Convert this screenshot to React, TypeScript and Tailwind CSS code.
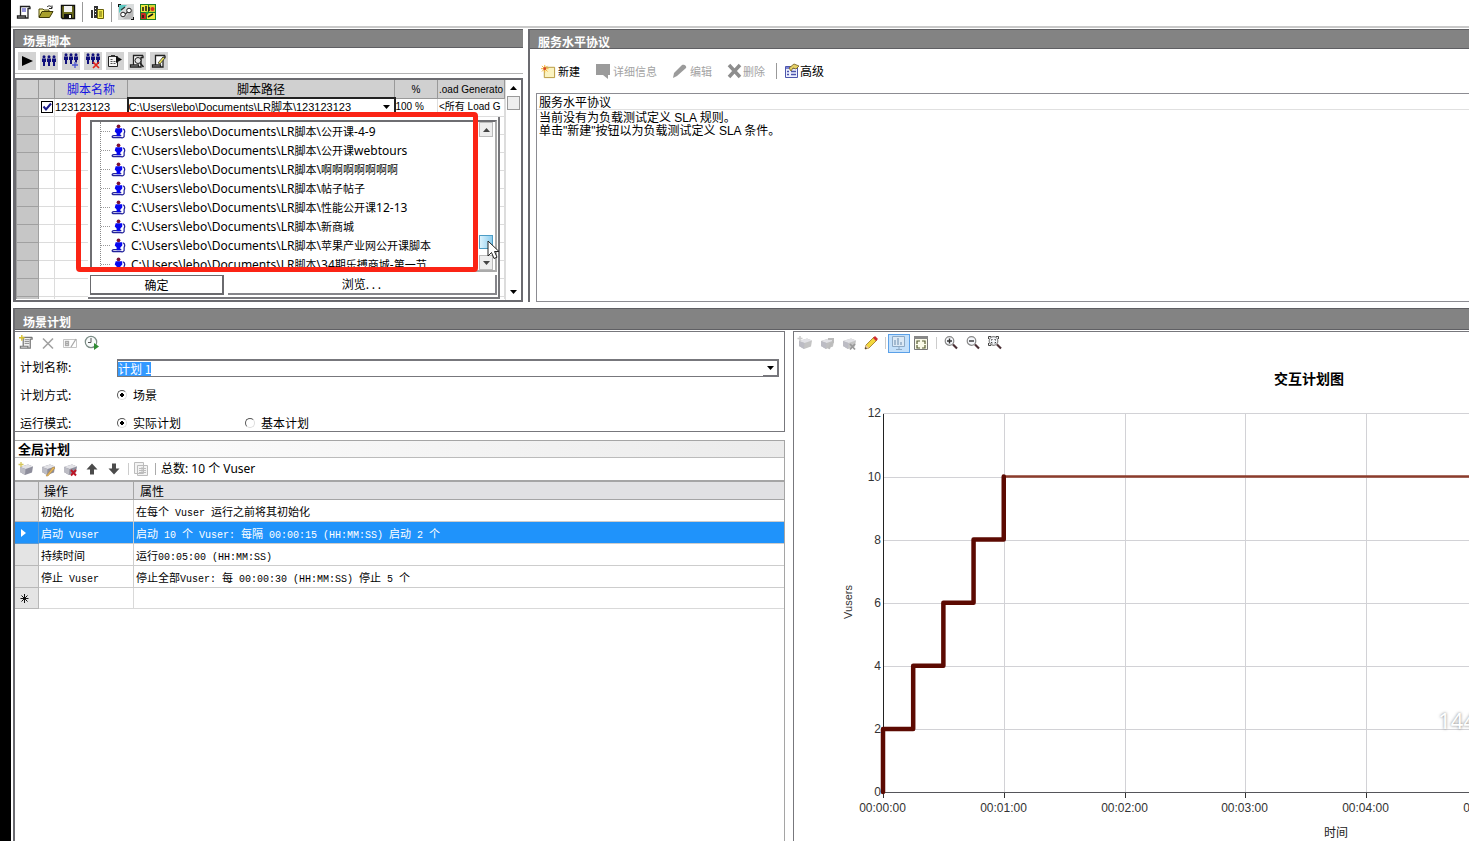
import { Fragment, useEffect, useRef, useState } from 'react'
import type { ReactNode } from 'react'

const ROOT = 'C:\\Users\\lebo\\Documents\\LR脚本\\'

const SCRIPTS = [
  '公开课-4-9',
  '公开课webtours',
  '啊啊啊啊啊啊啊',
  '帖子帖子',
  '性能公开课12-13',
  '新商城',
  '苹果产业网公开课脚本',
  '34期乐搏商城-第一节',
]

const ACTIONS = [
  { name: '初始化', props: '在每个 Vuser 运行之前将其初始化' },
  { name: '启动 Vuser', props: '启动 10 个 Vuser: 每隔 00:00:15 (HH:MM:SS) 启动 2 个' },
  { name: '持续时间', props: '运行00:05:00 (HH:MM:SS)' },
  { name: '停止 Vuser', props: '停止全部Vuser: 每 00:00:30 (HH:MM:SS) 停止 5 个' },
]

function Icon({ children, size = 16 }: { children: ReactNode; size?: number }) {
  return (
    <svg width={size} height={size} viewBox="0 0 16 16" fill="none" aria-hidden="true" className="block shrink-0">
      {children}
    </svg>
  )
}

function Scroll({ dim = false }: { dim?: boolean }) {
  const c = dim ? '#777' : '#222'
  return (
    <>
      <path d="M4 2h10v2h-2v9H3v1h-2v-2h3z" fill={dim ? '#f2f2f2' : '#fff'} />
      <path d="M4.500 12V2.500h9.500M14 2.500v2h-2M12 4v8M1.500 12h8v2h-8zM9.500 14H12v-3" stroke={c} strokeWidth="1.300" />
    </>
  )
}

function People() {
  return (
    <g fill="#10107c">
      {[3, 8, 13].map(x => (
        <g key={x}>
          <circle cx={x} cy="3.800" r="1.500" />
          <path d={`M${x - 2} 5.500h4v3.500h-1v4h-2v-4h-1z`} />
        </g>
      ))}
    </g>
  )
}

function Cube({ color = '#8e8e9c' }: { color?: string }) {
  return (
    <>
      <path d="M2 6l8-2.500 5 2-1 6-7 2.500-5-3z" fill={color} />
      <path d="M2 6l8-2.500 5 2-7.500 2.500z" fill="#e2e2e6" />
      <path d="M2 6l5.500 2-.5 6-5-3z" fill="#bcbcc4" />
    </>
  )
}

function Pencil() {
  return (
    <>
      <path d="M2 14l1-4 8-8 3 3-8 8z" fill="#f3d83c" stroke="#8a6414" strokeWidth=".7" />
      <path d="M10 3l2-2 3 3-2 2z" fill="#cf2d35" />
      <path d="M2 14l1-4 3 3z" fill="#eecaa4" />
      <path d="M2 14l.5-2 1.500 1.500z" fill="#222" />
    </>
  )
}

function Zoomer({ children }: { children?: ReactNode }) {
  return (
    <Icon>
      <circle cx="6.500" cy="6" r="4.300" fill="#f4f6fa" stroke="#888" strokeWidth="1.200" />
      <path d="M10 9.500l4 4" stroke="#4a2f35" strokeWidth="2.200" />
      {children}
    </Icon>
  )
}

function Tool({ label, children, className = 'size-[18px]' }: { label: string; children: ReactNode; className?: string }) {
  return (
    <button type="button" aria-label={label} className={`flex shrink-0 items-center justify-center ${className}`}>
      {children}
    </button>
  )
}

function Sep({ className = 'h-4 bg-[#b5b5b5]' }: { className?: string }) {
  return <span className={`w-px shrink-0 ${className}`} />
}

// latin runs get a font of their own beside the full-width characters
function Mixed({ text, latin }: { text: string; latin: string }) {
  return (
    <>
      {text.split(/([\x20-\x7e]+)/).map((part, i) =>
        i % 2 ? (
          <span key={i} className={`whitespace-pre ${latin}`}>
            {part}
          </span>
        ) : (
          <Fragment key={i}>{part}</Fragment>
        ),
      )}
    </>
  )
}

function TitleBar({ title, className }: { title: string; className: string }) {
  return (
    <h2 className={`shrink-0 border-y border-[#5f5f63] bg-[#838383] pl-2 text-xs font-bold text-white ${className}`}>
      {title}
    </h2>
  )
}

function MainToolbar() {
  return (
    <header className="flex h-[28px] shrink-0 items-center gap-[6px] border-b-2 border-[#c9c9c9] pb-[2px] pl-[5px]">
      <Tool label="新建场景" className="size-4">
        <Icon>
          <Scroll />
          <path d="M6 5h4M6 7h4" stroke="#2b2bb5" />
        </Icon>
      </Tool>
      <Tool label="打开" className="size-4">
        <Icon>
          <path d="M1 13V5h4l1 1h5v2H5z" fill="#f6ef8d" stroke="#4d4908" />
          <path d="M1 13.500l3-6h11l-3.500 6z" fill="#a8a02c" stroke="#3d3a08" />
          <path d="M9 3c2-2 4-1 5 1m0-2.500v3h-3" stroke="#222" />
        </Icon>
      </Tool>
      <Tool label="保存" className="size-4">
        <Icon>
          <path d="M1.500 1.500h13v13h-12l-1-1z" fill="#6b6b1d" stroke="#111" strokeWidth="1.400" />
          <path d="M4 2h8v6H4z" fill="#f3f3f3" />
          <path d="M4 10h8v4H4z" fill="#111" />
          <path d="M9 11h2v3H9z" fill="#fff" />
        </Icon>
      </Tool>
      <Sep className="h-5 bg-[#999]" />
      <Tool label="负载生成器" className="size-4">
        <Icon>
          <path d="M2 6h2v8H2zM5 2h4v12H5z" fill="#333" />
          <path d="M6 4h1v1H6zM6 7h1v1H6zM6 10h1v1H6z" fill="#fff" />
          <path d="M8.500 5.500h6v9h-6z" fill="#f4ec4e" stroke="#69620c" />
          <path d="M10 8h3M10 10h3M10 12h3" stroke="#69620c" />
        </Icon>
      </Tool>
      <Sep className="h-5 bg-[#999]" />
      <Tool label="设计" className="size-4">
        <Icon>
          <path d="M0 0h16v16H0z" fill="#d9dcdc" />
          <path d="M1 1h8L1 9z" fill="#5fc9c2" />
          <path d="M15 5v10H5z" fill="#b9b9b9" />
          <path d="M5 12l7-6M3 6l4-3" stroke="#333" strokeWidth="1.200" />
          <circle cx="5" cy="10.500" r="2.300" fill="#fff" stroke="#222" />
          <circle cx="11" cy="6.500" r="2.300" fill="#fff" stroke="#222" />
          <path d="M0 0h3v1H1v2H0zM16 16h-3v-1h2v-2h1z" fill="#111" />
        </Icon>
      </Tool>
      <Tool label="运行" className="size-4">
        <Icon>
          <path d="M0 0h16v16H0z" fill="#1c7c28" />
          <path d="M1 1h7v7H1z" fill="#f0e83a" />
          <path d="M9 1h6v7H9z" fill="#d8cf2e" />
          <path d="M1 9h5v6H1z" fill="#c52b22" />
          <path d="M7 9h8v6H7z" fill="#f0e83a" />
          <path d="M3 3v4M6 2v5M9 3v4M3 11v3M8 13l5-3" stroke="#161616" strokeWidth="1.500" />
          <circle cx="12.500" cy="5" r="2" fill="#d62b1e" />
          <circle cx="7" cy="9" r="1.500" fill="#1fa03a" />
        </Icon>
      </Tool>
    </header>
  )
}

function ScriptToolbar() {
  const cls = 'size-[18px] bg-[#d3d3d3]'
  return (
    <div className="flex h-[26px] shrink-0 items-center gap-1 border-b border-[#b4b4b4] pl-[3px]">
      <Tool label="运行脚本" className={cls}>
        <Icon>
          <path d="M3 3l11 5-11 5z" fill="#000" />
        </Icon>
      </Tool>
      <Tool label="Vuser 组" className={cls}>
        <Icon>
          <People />
        </Icon>
      </Tool>
      <Tool label="添加组" className={cls}>
        <Icon>
          <g transform="translate(0 -2)">
            <People />
          </g>
          <path d="M9 12h6M12 9v6" stroke="#d3d3d3" strokeWidth="3" />
          <path d="M9 12h6M12 9v6" stroke="#4a54d2" strokeWidth="1.300" />
        </Icon>
      </Tool>
      <Tool label="删除组" className={cls}>
        <Icon>
          <g transform="translate(0 -2)">
            <People />
          </g>
          <path d="M8 9l6 6M14 9l-6 6" stroke="#e2231a" strokeWidth="1.700" />
        </Icon>
      </Tool>
      <Tool label="运行时设置" className={cls}>
        <Icon>
          <path d="M1.500 3.500h9v10h-9z" fill="#f4f4f4" stroke="#222" />
          <path d="M4 2h4v2H4z" fill="#333" />
          <path d="M3.500 6.500h2M3.500 8.500h2M3.500 10.500h2M6.500 8.500h2M6.500 10.500h2" stroke="#555" />
          <path d="M9 3l6 3.500L9 10z" fill="#111" />
        </Icon>
      </Tool>
      <Tool label="详细信息" className={cls}>
        <Icon>
          <Scroll />
          <circle cx="9" cy="7.500" r="3" fill="#e4e4e4" stroke="#222" />
          <path d="M11 10l3.500 4" stroke="#222" strokeWidth="1.500" />
        </Icon>
      </Tool>
      <Tool label="查看脚本" className={cls}>
        <Icon>
          <Scroll />
          <path d="M7 10l5-6 2 1-5 6z" fill="#eee45a" stroke="#333" strokeWidth=".8" />
        </Icon>
      </Tool>
    </div>
  )
}

function ScriptPicker({ onPick }: { onPick: (s: string) => void }) {
  return (
    <div className="absolute top-[37px] left-[72px] flex h-[182px] w-[412px] flex-col border-r-2 border-b-2 border-[#77777b] bg-white pt-[3px] pr-px pb-[2px] pl-[2px] text-black">
      <div className="flex h-[152px] shrink-0 border-2 border-r-[#aaa] border-b-[#aaa] border-[#6e6e72] bg-white">
        <ul className="ml-2 flex-1 overflow-hidden border-l border-dotted border-[#888] text-[11px] leading-[19px]">
          {SCRIPTS.map(s => (
            <li key={s}>
              <button type="button" onClick={() => onPick(s)} className="flex h-[19px] items-center whitespace-nowrap">
                <span className="mr-px w-[9px] border-t border-dotted border-[#999]" />
                <Icon size={15}>
                  <path d="M13 5c1.500 1 2 3 1 5v3.500c-1 1.500-2 1.500-3 1H2c-1.500-1-.5-2 1-2h8" stroke="#22229c" strokeWidth="1.300" />
                  <path d="M5 4.500h7v3.500l-2 2v3H6v-3L4 8z" fill="#0808f0" />
                  <circle cx="8" cy="2.500" r="2" fill="#7a1236" />
                </Icon>
                <span className="ml-[5px]">
                  <Mixed text={ROOT + s} latin="text-xs font-['Noto_Sans',sans-serif]" />
                </span>
              </button>
            </li>
          ))}
        </ul>
        <div className="flex w-[18px] shrink-0 flex-col items-center">
          <ScrollButton up />
          <span className="mt-[98px] h-[14px] w-[14px] border border-[#4d9cc4] bg-linear-to-r from-[#dcf3fd] to-[#8ccdee]" />
          <span className="flex-1" />
          <ScrollButton />
        </div>
      </div>
      <div className="mt-[3px] flex flex-1 gap-1 text-xs">
        <button type="button" className="w-[134px] border-2 border-t border-l border-[#6a6a6e]">
          确定
        </button>
        <button type="button" className="flex-1 border-r-2 border-b-2 border-[#85858a]">
          浏览. . .
        </button>
      </div>
    </div>
  )
}

function ScrollButton({ up = false }: { up?: boolean }) {
  return (
    <button
      type="button"
      aria-label={up ? '向上滚动' : '向下滚动'}
      className="flex h-[15px] w-[14px] shrink-0 items-center justify-center border border-[#bbb] bg-[#ededed]"
    >
      <svg width="7" height="4" viewBox="0 0 7 4" aria-hidden="true">
        <path d={up ? 'M0 4l3.500-4L7 4z' : 'M0 0l3.500 4L7 0z'} fill="#444" />
      </svg>
    </button>
  )
}

function ScriptPanel() {
  const [path, setPath] = useState('123123123')
  return (
    <section className="relative flex w-[510px] shrink-0 flex-col border-l-2 border-[#6b6b70]">
      <TitleBar title="场景脚本" className="h-[19px] leading-[22px]" />
      <ScriptToolbar />
      <div className="relative mt-1 flex flex-1 border-2 border-l border-[#6b6b70]">
        <div className="h-[219px] flex-1 overflow-hidden">
          <table className="w-full table-fixed border-collapse font-['Liberation_Sans','Noto_Sans_CJK_SC',sans-serif] text-[11px]">
            <colgroup>
              <col className="w-[22px]" />
              <col className="w-[16px]" />
              <col className="w-[73px]" />
              <col className="w-[267px]" />
              <col className="w-[43px]" />
              <col />
            </colgroup>
            <thead>
              <tr className="h-[18px] bg-[#d0d0d0] text-xs leading-[14px]">
                <th className="border border-t-0 border-[#999] p-0" />
                <th className="border border-t-0 border-[#999] p-0" />
                <th className="border border-t-0 border-[#999] p-0 pt-[3px] font-normal text-[#1414e0]">脚本名称</th>
                <th className="border border-t-0 border-[#999] p-0 pt-[3px] font-normal">脚本路径</th>
                <th className="border border-t-0 border-[#999] p-0 pt-[3px] text-[10px] font-normal">%</th>
                <th className="border border-t-0 border-[#999] p-0 pt-[3px] text-[10px] font-normal whitespace-nowrap">
                  .oad Generato
                </th>
              </tr>
            </thead>
            <tbody>
              <tr className="h-[18px] leading-[16px] whitespace-nowrap">
                <td className="border border-[#aaa] bg-[#cacaca] p-0" />
                <td className="border border-[#ddd] p-0">
                  <label className="relative ml-[2px] block size-3">
                    <input
                      type="checkbox"
                      defaultChecked
                      aria-label="启用脚本"
                      className="peer block size-3 appearance-none border border-black bg-white"
                    />
                    <svg
                      viewBox="0 0 12 12"
                      className="pointer-events-none absolute inset-0 hidden peer-checked:block"
                      aria-hidden="true"
                    >
                      <path d="M2.500 5.500l2.500 3 5-6" stroke="#1c1c8c" strokeWidth="2" fill="none" />
                    </svg>
                  </label>
                </td>
                <td className="border border-[#ddd] p-0">123123123</td>
                <td className="border-2 border-[#222] p-0">
                  <div className="flex items-center">
                    <select
                      aria-label="脚本路径"
                      value={path}
                      onChange={e => setPath(e.target.value)}
                      className="h-[15px] min-w-0 flex-1 appearance-none bg-white leading-[15px] outline-none"
                    >
                      {['123123123', ...SCRIPTS].map(s => (
                        <option key={s} value={s}>
                          {ROOT + s}
                        </option>
                      ))}
                    </select>
                    <svg width="7" height="4" viewBox="0 0 7 4" className="mr-1" aria-hidden="true">
                      <path d="M0 0h7L3.500 4z" />
                    </svg>
                  </div>
                </td>
                <td className="border border-[#ddd] p-0 text-[10px]">100 %</td>
                <td className="border border-[#ddd] p-0 pl-px text-[10px]">&lt;所有 Load G</td>
              </tr>
              {Array.from({ length: 11 }, (_, i) => (
                <tr key={i} className="h-[18px]">
                  <td className="border border-[#a0a0a0] bg-[#c6c6c6] p-0" />
                  {[0, 1, 2, 3, 4].map(c => (
                    <td key={c} className="border border-[#dcdcdc] p-0" />
                  ))}
                </tr>
              ))}
            </tbody>
          </table>
        </div>
        <div className="flex w-[16px] shrink-0 flex-col items-center justify-between border-l border-[#ddd] py-[6px]">
          <button type="button" aria-label="向上滚动" className="flex flex-col items-center">
            <svg width="7" height="4" viewBox="0 0 7 4" aria-hidden="true">
              <path d="M0 4l3.500-4L7 4z" />
            </svg>
            <span className="mt-[6px] h-[14px] w-[13px] border border-[#999] bg-[#eee]" />
          </button>
          <button type="button" aria-label="向下滚动">
            <svg width="7" height="4" viewBox="0 0 7 4" aria-hidden="true">
              <path d="M0 0h7L3.500 4z" />
            </svg>
          </button>
        </div>
        <ScriptPicker onPick={setPath} />
      </div>
      <div className="pointer-events-none absolute top-[83px] left-[61px] h-[160px] w-[402px] rounded-[4px] border-5 border-[#fb2415]" />
      <svg width="14" height="20" viewBox="0 0 14 20" className="absolute top-[211px] left-[472px]" aria-hidden="true">
        <path d="M1 1v15l3.500-3.500 2.500 6 3-1.300-2.500-5.700H12z" fill="#fff" stroke="#222" />
      </svg>
    </section>
  )
}

function SlaPanel() {
  const dim = 'flex items-center gap-[2px] text-[#a3a3a3]'
  return (
    <section className="flex min-w-0 flex-1 flex-col border-l-2 border-[#6b6b70]">
      <TitleBar title="服务水平协议" className="h-[20px] leading-[23px]" />
      <div className="flex h-11 shrink-0 items-center gap-[15px] pl-[11px] text-[11px]">
        <button type="button" className="flex items-center gap-[2px]">
          <Icon size={15}>
            <path d="M3.500 3.500h11v11h-11z" fill="#fbf3c0" stroke="#b5963a" />
            <path d="M4 1v8M0 5h8M1 2l6 6M7 2L1 8" stroke="#f2ae2e" />
            <circle cx="4" cy="5" r="1.500" fill="#d9432c" />
          </Icon>
          新建
        </button>
        <button type="button" disabled className={dim}>
          <Icon>
            <path d="M1 1h14v11h-2v4l-5-4H1z" fill="#9b9b9b" />
          </Icon>
          详细信息
        </button>
        <button type="button" disabled className={dim}>
          <Icon>
            <path d="M1 15l1-5 8-8c2-1 5 1 4 3l-9 8z" fill="#9b9b9b" />
          </Icon>
          编辑
        </button>
        <button type="button" disabled className="flex items-center text-[#a3a3a3]">
          <Icon>
            <path d="M2 2l11 12M13 2L2 14" stroke="#8d8d8d" strokeWidth="3.500" />
          </Icon>
          删除
        </button>
        <span className="-mx-1">
          <Sep className="block h-4 bg-[#999]" />
        </span>
        <button type="button" className="-ml-1 flex items-center text-xs">
          <Icon>
            <path d="M1.500 3.500h12v11h-12z" fill="#edf0ff" stroke="#4d56ad" />
            <path d="M2 4h11v2H2z" fill="#7a83d6" />
            <path d="M3 8.500h2M3 11.500h2M7 8.500h5M7 11.500h5" stroke="#4d56ad" strokeWidth="1.300" />
            <path d="M5 5l5-4 5 2-3 3-3-1-2 3z" fill="#e4d068" stroke="#75601c" strokeWidth=".8" />
          </Icon>
          高级
        </button>
      </div>
      <div className="ml-[6px] flex-1 border border-r-0 border-[#8c8c92] text-xs">
        <p className="h-[16px] border-b border-[#e0e0e0] pl-[2px] leading-[16px]">服务水平协议</p>
        <div className="pt-px pl-[2px] leading-[12px]">
          <p>
            <Mixed text="当前没有为负载测试定义 SLA 规则。" latin="font-['Liberation_Sans',sans-serif]" />
          </p>
          <p>
            <Mixed text={'单击"新建"按钮以为负载测试定义 SLA 条件。'} latin="font-['Liberation_Sans',sans-serif]" />
          </p>
        </div>
      </div>
    </section>
  )
}

function Radio({ name, label, checked = false }: { name: string; label: string; checked?: boolean }) {
  return (
    <label className="flex items-start gap-[6px]">
      <input
        type="radio"
        name={name}
        defaultChecked={checked}
        className="size-[10px] appearance-none rounded-full border border-[#ddd] border-t-[#555] border-l-[#555] checked:bg-[radial-gradient(circle,#000_2px,transparent_2px)]"
      />
      <span className="leading-[10px]">{label}</span>
    </label>
  )
}

function PlanForm() {
  const ref = useRef<HTMLInputElement>(null)

  useEffect(() => {
    ref.current?.focus()
    ref.current?.select()
  }, [])

  return (
    <div className="h-[101px] shrink-0 overflow-hidden border border-l-0 border-[#77777c] text-xs">
      <div className="flex h-[21px] items-center gap-[6px] pl-[3px]">
        <Tool label="新建计划" className="size-4">
          <Icon size={15}>
            <Scroll dim />
            <path d="M6 5h5M6 7h5M6 9h5" stroke="#888" />
            <path d="M3 0v6M0 3h6" stroke="#d6c02f" strokeWidth="1.500" />
          </Icon>
        </Tool>
        <Tool label="删除计划" className="size-4">
          <Icon>
            <path d="M3 3.500l10 10M13 3.500l-10 10" stroke="#a2a2a2" strokeWidth="1.600" />
          </Icon>
        </Tool>
        <Tool label="重命名" className="size-4">
          <Icon>
            <path d="M1.500 4.500h13v8h-13z" stroke="#c5c5c5" />
            <path d="M3.500 6.500h3v4h-3zM3.500 8.500h3M9 12l5-8" stroke="#aaa" strokeWidth="1.300" />
          </Icon>
        </Tool>
        <Tool label="开始时间" className="size-4">
          <Icon>
            <circle cx="7" cy="7" r="5.700" fill="#f7fafa" stroke="#7c8c86" strokeWidth="1.200" />
            <path d="M7 3v4.500H4" stroke="#555" />
            <path d="M10 8l5 3.500-5 3.500z" fill="#2f8c32" />
          </Icon>
        </Tool>
      </div>
      <div className="flex h-[30px] items-center pl-[5px]">
        <label htmlFor="plan" className="w-[97px] shrink-0 pb-[3px]">
          计划名称:
        </label>
        <div className="mr-[5px] flex h-[18px] flex-1 items-center border border-t-2 border-[#77777c]">
          <input
            id="plan"
            ref={ref}
            defaultValue="计划 1"
            className="h-[14px] min-w-0 flex-1 leading-[14px] outline-none selection:bg-[#3399ff] selection:text-white"
          />
          <button
            type="button"
            aria-label="选择计划"
            className="flex h-full w-[15px] items-center justify-center border-r border-b border-[#77777c]"
          >
            <svg width="7" height="4" viewBox="0 0 7 4" aria-hidden="true">
              <path d="M0 0h7L3.500 4z" />
            </svg>
          </button>
        </div>
      </div>
      <div role="radiogroup" aria-label="计划方式" className="flex h-6 items-center pl-[5px]">
        <span className="w-[97px] shrink-0">计划方式:</span>
        <Radio name="mode" label="场景" checked />
      </div>
      <div role="radiogroup" aria-label="运行模式" className="flex h-8 items-center pl-[5px]">
        <span className="w-[97px] shrink-0">运行模式:</span>
        <div className="flex">
          <div className="w-[128px]">
            <Radio name="run" label="实际计划" checked />
          </div>
          <Radio name="run" label="基本计划" />
        </div>
      </div>
    </div>
  )
}

function GlobalPlan() {
  const head = 'border-b border-[#a5a5a5] bg-[#e1e1e3] p-0 text-left font-normal'
  const mono = "font-['Liberation_Mono',monospace] text-[10px]"
  return (
    <div className="mt-2 flex-1 border-t border-r border-[#a5a5a5]">
      <h3 className="h-[17px] border-b border-[#bbb] bg-linear-to-r from-white to-[#ebebeb] pl-[3px] text-[13px] leading-[15px] font-bold">
        全局计划
      </h3>
      <div className="flex h-[22px] items-center gap-[6px] pl-[3px]">
        <Tool label="添加操作" className="size-4">
          <Icon>
            <Cube />
            <path d="M3 1v5M.5 3.500h5" stroke="#d4c55a" strokeWidth="1.300" />
          </Icon>
        </Tool>
        <Tool label="编辑操作" className="size-4">
          <Icon>
            <Cube />
            <path d="M6 15l7-9 2 1-7 8z" fill="#e6b659" stroke="#a98243" strokeWidth=".5" />
          </Icon>
        </Tool>
        <Tool label="删除操作" className="size-4">
          <Icon>
            <Cube />
            <path d="M9 9l5 5.500M14 9l-5 5.500" stroke="#bb1526" strokeWidth="1.900" />
          </Icon>
        </Tool>
        <Tool label="上移" className="size-4">
          <Icon>
            <path d="M8 2.500l5.500 6H10v5H6v-5H2.500z" fill="#4b4b4b" />
          </Icon>
        </Tool>
        <Tool label="下移" className="size-4">
          <Icon>
            <path d="M8 13.500l5.500-6H10v-5H6v5H2.500z" fill="#4b4b4b" />
          </Icon>
        </Tool>
        <Sep className="h-3 bg-[#ccc]" />
        <Tool label="复制" className="-ml-[2px] size-4">
          <Icon>
            <path d="M1.500 1.500h9v11h-9zM4.500 4.500h10v10h-10z" fill="#f3f3f3" stroke="#bcbcbc" />
            <path d="M6 7.500h7M6 9.500h7M6 11.500h7M9 6v7" stroke="#bcbcbc" />
          </Icon>
        </Tool>
        <Sep className="h-3 bg-[#aaa]" />
        <span className="-ml-px pb-px font-['Noto_Sans','Noto_Sans_CJK_SC',sans-serif] text-xs">总数: 10 个 Vuser</span>
      </div>
      <table className="w-full table-fixed border-separate border-spacing-0 border-t-2 border-[#a5a5a5] text-[11px]">
        <colgroup>
          <col className="w-[24px]" />
          <col className="w-[95px]" />
          <col />
        </colgroup>
        <thead>
          <tr className="h-[18px] text-xs leading-[17px]">
            <th className={`border-r ${head}`} />
            <th className={`border-r ${head}`}>
              <span className="pl-[5px]">操作</span>
            </th>
            <th className={head}>
              <span className="pl-[6px]">属性</span>
            </th>
          </tr>
        </thead>
        <tbody>
          {ACTIONS.map((a, i) => (
            <tr key={a.name} className={`h-[22px] leading-[20px] ${i === 1 ? 'bg-[#1f93fb] text-white' : ''}`}>
              <td className={`border-r border-b p-0 ${i === 1 ? 'border-[#5c9bd4]' : 'border-[#b8b8b8] bg-[#e4e4e4]'}`}>
                {i === 1 && (
                  <svg width="5" height="8" viewBox="0 0 5 8" className="ml-[6px]" aria-hidden="true">
                    <path d="M0 0l5 4-5 4z" fill="#fff" />
                  </svg>
                )}
              </td>
              <td className="border-r border-b border-[#cdcdcd] p-0 pl-[2px]">
                <div className="h-[20px]">
                  <Mixed text={a.name} latin={mono} />
                </div>
              </td>
              <td className="border-b border-[#cdcdcd] p-0 pl-[2px]">
                <div className="h-[20px]">
                  <Mixed text={a.props} latin={mono} />
                </div>
              </td>
            </tr>
          ))}
          <tr className="h-[21px]">
            <td className="border-r border-b border-[#b8b8b8] bg-[#e4e4e4] p-0">
              <svg width="9" height="9" viewBox="0 0 9 9" className="ml-[5px]" aria-hidden="true">
                <path d="M4.500 0v9M.5 4.500h8M1.500 1.500l6 6M7.500 1.500l-6 6" stroke="#111" />
              </svg>
            </td>
            <td className="border-r border-b border-[#d9d9d9] p-0" />
            <td className="border-b border-[#d9d9d9] p-0" />
          </tr>
        </tbody>
      </table>
    </div>
  )
}

function ScheduleChart() {
  const x0 = 89
  const y0 = 437
  const minute = 120.75
  const unit = 31.55
  const q = minute / 4
  let steps = `M${x0} ${y0}`
  for (let i = 1; i <= 5; i++) {
    steps += `V${y0 - i * 2 * unit}`
    if (i < 5) steps += `H${x0 + i * q}`
  }
  const top = y0 - 10 * unit
  return (
    <svg
      className="block h-[487px] w-full font-['Liberation_Sans','Noto_Sans_CJK_SC',sans-serif] text-xs"
      role="img"
      aria-label="交互计划图"
    >
      <text x="515" y="29" textAnchor="middle" className="text-sm font-bold">
        交互计划图
      </text>
      {[0, 2, 4, 6, 8, 10, 12].map(v => {
        const y = Math.round(y0 - v * unit) + 0.5
        return (
          <g key={v}>
            {v > 0 && <line x1={x0} x2="100%" y1={y} y2={y} stroke="#d2d2d6" />}
            <text x={x0 - 2} y={y + 3} textAnchor="end" fill="#333">
              {v}
            </text>
          </g>
        )
      })}
      {[0, 1, 2, 3, 4, 5].map(m => {
        const x = Math.round(x0 + m * minute) + 0.5
        return (
          <g key={m}>
            {m > 0 && <line x1={x} x2={x} y1="59" y2={y0} stroke="#d2d2d6" />}
            <line x1={x} x2={x} y1={y0} y2={y0 + 6} stroke="#333" />
            <text x={x - 1} y="457" textAnchor="middle" fill="#333">
              {`00:0${m}:00`}
            </text>
          </g>
        )
      })}
      <path d={`M${x0 + 0.5} 59V${y0}`} stroke="#222" />
      <path d={`M${x0} ${y0 + 0.5}H2000`} stroke="#55555a" />
      <path d={`M${x0 + minute} ${top}H2000`} stroke="#8c3c2c" strokeWidth="2.500" />
      <path d={steps + `H${x0 + minute}V${top}`} stroke="#5c0a02" strokeWidth="4.500" fill="none" strokeLinejoin="round" strokeLinecap="round" />
      <text transform="translate(58 247) rotate(-90)" textAnchor="middle" fill="#333" className="text-[11px]">
        Vusers
      </text>
      <text x="542" y="482" textAnchor="middle" fill="#222">
        时间
      </text>
    </svg>
  )
}

function ChartPanel() {
  return (
    <section className="relative min-w-0 flex-1 overflow-hidden border-t border-l border-[#77777c]">
      <div className="flex h-[23px] items-center gap-[6px] pb-px pl-[3px]">
        <Tool label="添加" className="size-4">
          <Icon>
            <Cube color="#c4c4c4" />
            <path d="M3 1v5M.5 3.500h5" stroke="#ccc" strokeWidth="1.500" />
          </Icon>
        </Tool>
        <Tool label="拆分" className="size-4">
          <Icon>
            <Cube color="#c0c0c0" />
            <path d="M9 4h5v3l-3 3-1 4" stroke="#bcbcbc" strokeWidth="2" />
          </Icon>
        </Tool>
        <Tool label="移除" className="size-4">
          <Icon>
            <Cube color="#c4c4c4" />
            <path d="M9 9l5 5.500M14 9l-5 5.500" stroke="#999" strokeWidth="1.800" />
          </Icon>
        </Tool>
        <Tool label="编辑图" className="size-4">
          <Icon>
            <Pencil />
          </Icon>
        </Tool>
        <div className="flex items-center gap-[2px]">
          <Sep className="h-3 bg-[#ccc]" />
          <Tool label="显示图" className="h-[19px] w-[22px] border border-[#5aa0e8] bg-[#c4e0fa]">
            <Icon>
              <path d="M1.500 1.500h12v10h-12zM5 14.500h6M8 12v2" fill="#dce9f5" stroke="#8ea9c4" />
              <path d="M4 10V5M7 10V3M10 10V7" stroke="#8ea9c4" strokeWidth="1.500" />
            </Icon>
          </Tool>
          <Tool label="全屏" className="size-[18px]">
            <Icon>
              <path d="M1.500 1.500h13v13h-13z" fill="#fbfbe9" stroke="#777" />
              <path d="M1 1h14v3H1z" fill="#888" />
              <path d="M4 9V6h3M9 6h3v3M12 10v3H9M7 13H4v-3" stroke="#555b30" strokeWidth="1.200" />
            </Icon>
          </Tool>
        </div>
        <Sep className="h-3 bg-[#ccc]" />
        <Tool label="放大" className="size-4">
          <Zoomer>
            <path d="M4 6h5M6.500 3.500v5" stroke="#333" strokeWidth="1.400" />
          </Zoomer>
        </Tool>
        <Tool label="缩小" className="size-4">
          <Zoomer>
            <path d="M4 6h5" stroke="#333" strokeWidth="1.400" />
          </Zoomer>
        </Tool>
        <Tool label="全部显示" className="size-4">
          <Zoomer>
            <path d="M1.500 4V1.500H4M9 1.500h2.500V4M1.500 8v2.500H4M4.500 5.500v-1h1M7.500 4.500h1v1M4.500 7v1h1M7.500 8h1V7" stroke="#444" />
          </Zoomer>
        </Tool>
      </div>
      <ScheduleChart />
      <span className="absolute top-[373px] -right-[7px] font-['Open_Sans',sans-serif] text-[22px] leading-[30px] text-white [text-shadow:0_0_3px_#777]">
        144
      </span>
    </section>
  )
}

export default function App() {
  return (
    <div className="flex h-screen min-h-[600px] overflow-hidden bg-white font-['Noto_Sans_CJK_SC',sans-serif] text-black">
      <div className="w-[11px] shrink-0 bg-black" />
      <main className="flex min-w-0 flex-1 flex-col">
        <MainToolbar />
        <div className="mt-px ml-[2px] flex h-[273px] shrink-0 gap-[5px]">
          <ScriptPanel />
          <SlaPanel />
        </div>
        <section className="mt-[6px] ml-[2px] flex min-h-0 flex-1 flex-col border-l-2 border-[#6b6b70]">
          <TitleBar title="场景计划" className="h-[22px] leading-[25px]" />
          <div className="mt-px flex min-h-0 flex-1 gap-2">
            <div className="flex w-[770px] shrink-0 flex-col">
              <PlanForm />
              <GlobalPlan />
            </div>
            <ChartPanel />
          </div>
        </section>
      </main>
    </div>
  )
}
